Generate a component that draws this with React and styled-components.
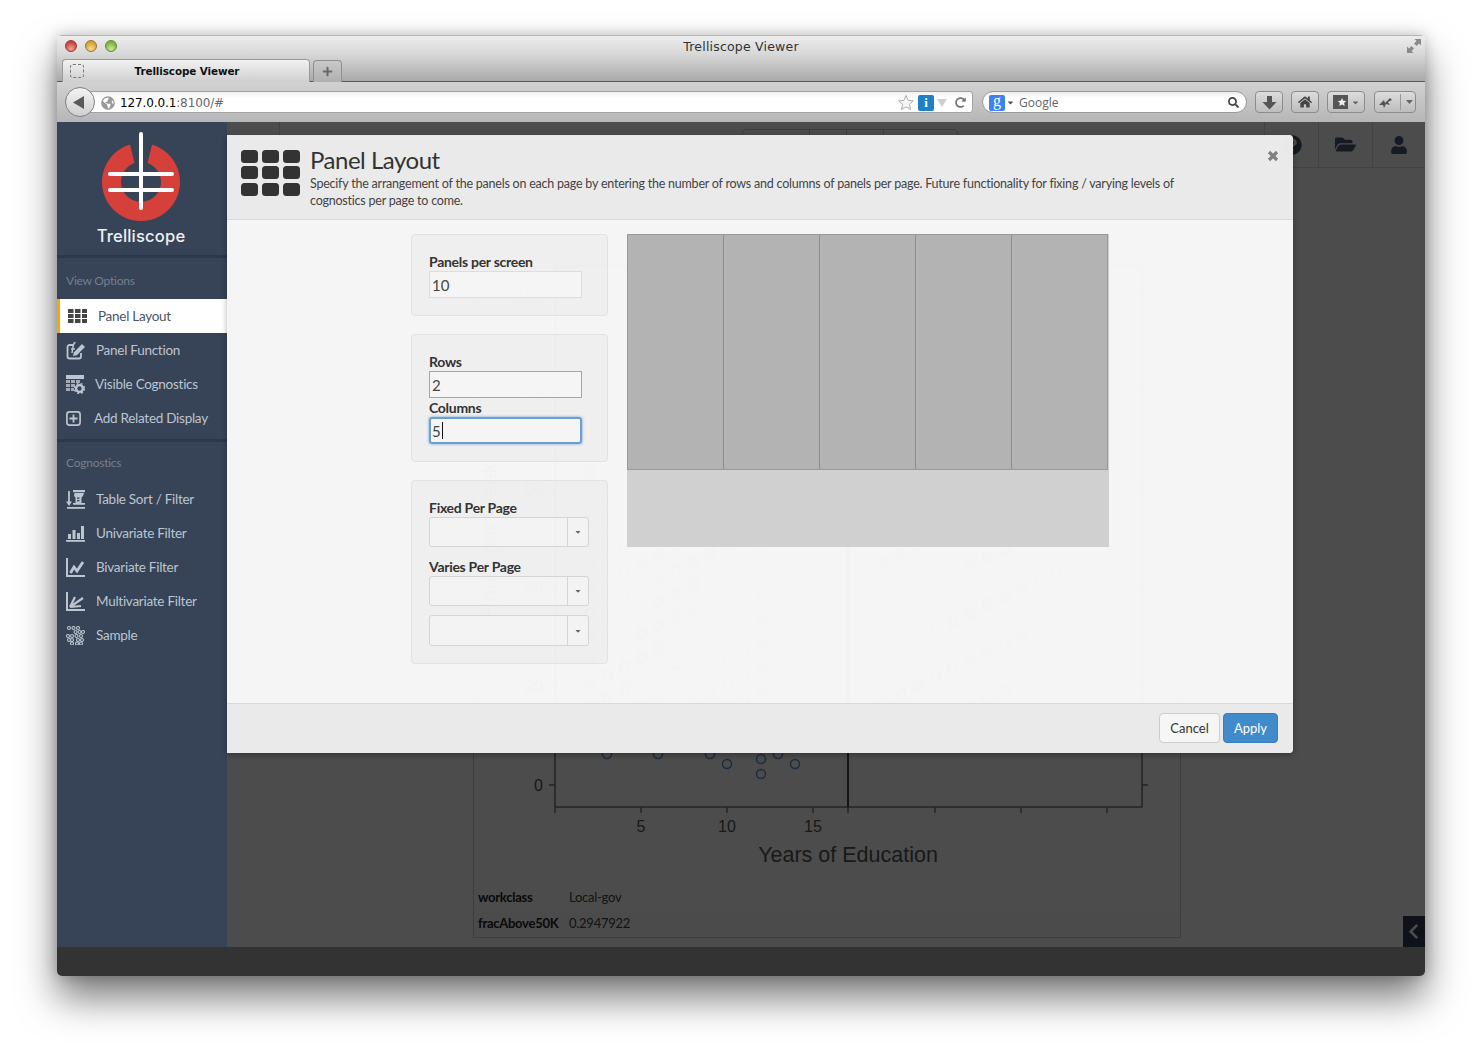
import React from "react";
import styled, { createGlobalStyle } from "styled-components";
import { FaFolderOpen, FaUser, FaChevronLeft, FaHome, FaSearch, FaPlus, FaCaretDown, FaRedoAlt, FaGlobeAmericas, FaQuestionCircle } from "react-icons/fa";

const Global = createGlobalStyle`
  html, body { margin: 0; padding: 0; background: #fff; }
  * { box-sizing: border-box; }
`;

const Page = styled.div`
  width: 1482px; height: 1055px; padding: 35px 57px 79px; overflow: hidden;
  background: #fff; font-family: Lato, "Open Sans", sans-serif;
`;
const Win = styled.div`
  height: 941px; display: flex; flex-direction: column; border-radius: 5px; overflow: hidden;
`;
const Shadow = styled.div`
  height: 941px; border-radius: 5px;
  box-shadow: 0 22px 38px rgba(0,0,0,.52), 0 0 14px rgba(0,0,0,.22);
`;
const TitleBar = styled.div`
  height: 47px; flex: none; position: relative; border-bottom: 1px solid #5a5a5a;
  border-top: 1px solid #b4b4b4;
  background: linear-gradient(#ececec, #d8d8d8 40%, #a9a9a9);
`;
const Lights = styled.div`
  position: absolute; left: 8px; top: 4px; display: flex; gap: 8px;
`;
const Light = styled.span`
  width: 12px; height: 12px; border-radius: 50%; border: 1px solid ${p => p.$edge};
  background: radial-gradient(circle at 50% 80%, ${p => p.$hi}, ${p => p.$c} 70%);
`;
const WinTitle = styled.div`
  position: absolute; left: 0; right: 0; top: 3px; text-align: center;
  font: 12.5px/16px "DejaVu Sans", sans-serif; letter-spacing: .2px; color: #333;
`;
const Expand = styled.svg`
  position: absolute; right: 4px; top: 3px; width: 14px; height: 14px;
`;
const TabRow = styled.div`
  position: absolute; left: 5px; top: 23px; display: flex; gap: 3px; align-items: flex-end;
`;
const Tab = styled.div`
  width: 248px; height: 23px; position: relative; display: flex; align-items: center; justify-content: center;
  border: 1px solid #9a9a9a; border-bottom: none; border-radius: 4px 4px 0 0;
  background: linear-gradient(#f2f2f2, #cfcfcf);
  font: bold 10.4px/14px "DejaVu Sans", sans-serif; letter-spacing: -.01em; color: #111; padding: 0 0 0 2px;
`;
const TabFav = styled.span`
  position: absolute; left: 7px; top: 4px; width: 14px; height: 14px;
  border: 1px dashed #777; border-radius: 3px;
`;
const NewTab = styled.div`
  width: 29px; height: 22px; display: flex; align-items: center; justify-content: center;
  border: 1px solid #8f8f8f; border-bottom: none; border-radius: 4px 4px 0 0;
  background: linear-gradient(#c9c9c9, #b0b0b0); color: #6a6a6a; font-size: 11px;
`;
const Toolbar = styled.div`
  height: 40px; flex: none; position: relative; display: flex; align-items: center; padding: 0 9px 0 8px;
  background: linear-gradient(#d2d2d2, #b6b6b6);
`;
const Back = styled.div`
  width: 30px; height: 30px; border-radius: 50%; flex: none; z-index: 1; display: flex; align-items: center; justify-content: center;
  border: 1px solid #808080; background: linear-gradient(#f4f4f4, #cfcfcf); padding-right: 3px;
`;
const Url = styled.div`
  width: 893px; height: 22px; margin-left: -15px; flex: none; display: flex; align-items: center; padding: 1px 5px 0 20px;
  border: 1px solid #a2a2a2; border-radius: 0 3px 3px 0; background: linear-gradient(#f0f0f0, #fff 30%);
  font: 12px/20px "DejaVu Sans", sans-serif; color: #000; letter-spacing: -.01em;
`;
const UrlMuted = styled.span` color: #666; `;
const UrlText = styled.span` margin-left: 5px; flex: 1; `;
const Info = styled.span`
  width: 16px; height: 16px; margin-left: 3px; display: flex; align-items: center; justify-content: center; border-radius: 2px;
  background: #1f80c8; color: #fff; font: bold 13px/16px "Liberation Serif", serif;
`;
const Search = styled.div`
  width: 265px; height: 22px; margin-left: 9px; flex: none; display: flex; align-items: center; padding: 1px 7px 0 6px;
  border: 1px solid #9a9a9a; border-radius: 11px; background: linear-gradient(#ececec, #fff 30%);
  font: 12px/20px "Open Sans", sans-serif; color: #666;
`;
const GBadge = styled.span`
  width: 16px; height: 16px; border-radius: 2px; background: #3d82f0; color: #fff; display: flex; align-items: center; justify-content: center;
  font: 16px/16px "Liberation Serif", serif; padding-bottom: 3px;
`;
const SearchText = styled.span` flex: 1; margin-left: 4px; `;
const ToolBtn = styled.div`
  width: ${p => p.$w}px; height: 22px; margin-left: ${p => p.$ml}px; flex: none; display: flex; align-items: center; justify-content: center; gap: 3px;
  border: 1px solid #8c8c8c; border-radius: 4px; background: linear-gradient(#dcdcdc, #bdbdbd); color: #444; font-size: 13px;
`;
const BtnSep = styled.span` width: 1px; height: 16px; background: #999; margin-left: 4px; `;
const Content = styled.div`
  flex: 1; position: relative; display: flex; flex-direction: column; min-height: 0;
`;
const Columns = styled.div` flex: 1; display: flex; min-height: 0; `;
const Side = styled.nav`
  width: 170px; flex: none; position: relative; z-index: 2; background: #374357;
`;
const Logo = styled.div`
  height: 136px; display: flex; flex-direction: column; align-items: center; padding: 10px 2px 0 0;
  border-bottom: 3px solid #2c3748;
`;
const LogoMark = styled.svg` width: 84px; height: 90px; flex: none; `;
const LogoText = styled.div`
  font: 500 16.6px/18px Inter, sans-serif; color: #eef0f2; margin-top: 5px; letter-spacing: .01em;
`;
const SideHead = styled.div`
  font-size: 12px; line-height: 16px; color: #74808f; padding: ${p => p.$pad}; letter-spacing: -.02em;
`;
const Item = styled.div`
  height: 34px; display: flex; align-items: center; gap: ${p => p.$gap}px;
  padding-left: ${p => p.$active ? 8 : 9}px;
  background: ${p => p.$active ? "#fff" : "transparent"};
  border-left: ${p => p.$active ? "3px solid #f5a800" : "none"};
  color: ${p => p.$active ? "#4a5568" : "#bcc5d0"};
  font-size: 13.5px; letter-spacing: -.02em;
`;
const SideRule = styled.div` height: 3px; margin-top: 4px; background: #2c3748; `;
const Main = styled.div`
  flex: 1; min-width: 0; display: flex; flex-direction: column; background: #fff;
`;
const TopBar = styled.div`
  height: 46px; flex: none; display: flex; align-items: stretch; justify-content: space-between; border-bottom: 1px solid #ddd;
`;
const Cell = styled.div`
  width: ${p => p.$w}px; display: flex; align-items: center; justify-content: center; color: #4a586e; font-size: 20px;
  border-${p => p.$side}: 1px solid #ddd;
`;
const Cells = styled.div` display: flex; `;
const Pager = styled.div`
  display: flex; align-items: center; height: 34px; margin: 7px 0 0 156px; border: 1px solid #ccc; border-radius: 4px; font-size: 13px; color: #888;
`;
const PagerCell = styled.span` width: ${p => p.$w}px; text-align: center; border-left: 1px solid #ccc; line-height: 32px; `;
const Stage = styled.div`
  flex: 1; min-height: 0; display: flex; justify-content: center; padding: 12px 0 9px 2px;
`;
const Card = styled.div`
  width: 708px; border: 1px solid #ccc; display: flex; flex-direction: column; background: #fff; padding-bottom: 1px;
`;
const Plot = styled.svg` flex: 1; min-height: 0; display: block; width: 706px; `;
const Meta = styled.div`
  height: 26px; flex: none; display: flex; align-items: center; padding-left: 4px; font-size: 13px; letter-spacing: -.02em;
  background: ${p => p.$alt ? "#fafafa" : "#fff"}; color: #444;
`;
const MetaKey = styled.b` width: 91px; flex: none; color: #222; `;
const Footer = styled.div` height: 29px; flex: none; background: #aaa; `;
const Chevron = styled.div`
  position: absolute; right: 0; bottom: 29px; width: 22px; height: 31px; padding-right: 2px; background: #323f50; color: #fff;
  display: flex; align-items: center; justify-content: center; font-size: 17px;
`;
const Dim = styled.div`
  position: absolute; inset: 0; background: rgba(0,0,0,.7); z-index: 1;
`;
const Modal = styled.div`
  position: absolute; left: 170px; top: 13px; width: 1066px; height: 618px; z-index: 3; display: flex; flex-direction: column;
  background: rgba(255,255,255,.945); border-radius: 0 4px 4px 0; box-shadow: 0 2px 6px rgba(0,0,0,.3);
`;
const ModalHead = styled.header`
  height: 85px; flex: none; position: relative; display: flex; gap: 10px; padding: 15px 0 0 14px;
  background: rgba(230,230,230,.7); border-bottom: 1px solid #d9d9d9; color: #333; border-radius: 0 4px 0 0;
`;
const HeadIcon = styled.svg` width: 59px; height: 46px; flex: none; `;
const HeadText = styled.div` width: 880px; margin-top: -3px; `;
const ModalTitle = styled.h3`
  margin: 0; font: 400 24px/26px Lato, sans-serif; color: #333; letter-spacing: -.02em;
`;
const ModalDesc = styled.p`
  margin: 2px 0 0; font: 12.5px/17px Lato, sans-serif; color: #444; letter-spacing: -.22px;
`;
const Close = styled.svg`
  position: absolute; right: 14px; top: 15px; width: 12px; height: 12px;
`;
const ModalBody = styled.div`
  flex: 1; display: flex; gap: 19px; padding: 14px 0 0 184px; align-items: flex-start;
`;
const FormCol = styled.div` width: 197px; display: flex; flex-direction: column; gap: 18px; `;
const Well = styled.section`
  border: 1px solid #e2e2e2; border-radius: 4px; background: rgba(225,225,225,.3); padding: 18px 17px 17px;
`;
const Label = styled.div`
  font: 700 14px/17px Lato, sans-serif; color: #333; letter-spacing: -.02em; margin: ${p => p.$mt || 0}px 0 1px;
`;
const Field = styled.div`
  width: 153px; height: 27px; padding-left: ${p => p.$focus ? 1 : 2}px; display: flex; align-items: center;
  font: 15px/20px Lato, sans-serif; color: #444;
  background: rgba(255,255,255,.4);
  border: ${p => p.$focus ? "2px solid #6a9fd4" : p.$dark ? "1px solid #a6a6a6" : "1px solid #ddd"};
  box-shadow: ${p => p.$focus ? "0 0 3px rgba(82,144,208,.8)" : "none"};
  border-radius: ${p => p.$focus ? "3px" : "0"};
`;
const Caret = styled.span` width: 1px; height: 17px; background: #111; margin-left: 1px; `;
const Select = styled.div`
  width: 160px; height: ${p => p.$h || 30}px; margin-top: ${p => p.$mt || 0}px; display: flex; justify-content: flex-end;
  border: 1px solid #d5d5d5; border-radius: 3px; background: rgba(255,255,255,.25);
`;
const SelectArrow = styled.span`
  width: 21px; border-left: 1px solid #d5d5d5; color: #666; font-size: 8px; display: flex; align-items: center; justify-content: center;
`;
const Preview = styled.div`
  width: 482px; height: 313px; flex: none; background: #d0d0d0;
`;
const PreviewRow = styled.div`
  width: 481px; height: 236px; display: flex; background: #b3b3b3; border: 1px solid #999;
`;
const PreviewCell = styled.div`
  flex: 1; border-left: ${p => p.$first ? "none" : "1px solid #8f8f8f"};
`;
const ModalFoot = styled.footer`
  height: 50px; flex: none; display: flex; justify-content: flex-end; align-items: center; gap: 3px; padding: 0 15px 1px 0;
  background: rgba(230,230,230,.7); border-top: 1px solid #d9d9d9; border-radius: 0 0 4px 0;
`;
const Btn = styled.button`
  height: 30px; width: ${p => p.$w}px; padding: 0; border-radius: 4px; font: 13px/18px Lato, sans-serif;
  border: 1px solid ${p => p.$primary ? "#3b7cbe" : "#ccc"};
  background: ${p => p.$primary ? "#428bca" : "#f6f6f6"};
  color: ${p => p.$primary ? "#fff" : "#333"};
`;

const s = { stroke: "currentColor", fill: "none" };
const IcoGrid = ({ c }) => (
  <svg width="19" height="15" viewBox="0 0 19 15" fill={c}>
    {[0, 7, 14].flatMap(x => [0, 5, 10].map(y => <rect key={x + "-" + y} x={x} y={y} width="5.5" height="4" />))}
  </svg>
);
const IcoFn = () => (
  <svg width="20" height="19" viewBox="0 0 20 19">
    <path d="M8 4H3.500A2 2 0 0 0 1.500 6v9.500a2 2 0 0 0 2 2H13a2 2 0 0 0 2-2V12" {...s} strokeWidth="1.800" />
    <path d="M7 15l.8-3.600L16 3l3 3-8.200 8.300z" fill="currentColor" />
    <path d="M5 8h4M9.500 1.500C7.500 1.500 7.500 3 7 6L6 12" {...s} strokeWidth="1.500" />
  </svg>
);
const IcoVis = () => (
  <svg width="19" height="19" viewBox="0 0 19 19" fill="currentColor">
    <rect x="0" y="0" width="18" height="4" />
    {[5, 9, 13].flatMap(y => [0, 5, 10].map(x => <rect key={x + "-" + y} x={x} y={y} width="4" height="3" opacity=".8" />))}
    <circle cx="13.500" cy="13.500" r="5.500" fill="#374357" />
    <circle cx="13.500" cy="13.500" r="3.400" fill="none" stroke="currentColor" strokeWidth="2.400" />
    <circle cx="13.500" cy="13.500" r="5" fill="none" stroke="currentColor" strokeWidth="1.400" strokeDasharray="2 2" />
  </svg>
);
const IcoAdd = () => (
  <svg width="15" height="15" viewBox="0 0 15 15">
    <rect x=".9" y=".9" width="13.200" height="13.200" rx="2.500" {...s} strokeWidth="1.700" />
    <path d="M7.500 3.500v8M3.500 7.500h8" {...s} strokeWidth="1.800" />
  </svg>
);
const IcoTable = () => (
  <svg width="19" height="20" viewBox="0 0 19 20" fill="currentColor">
    <path d="M3 2v12" {...s} strokeWidth="1.800" />
    <path d="M0 12.500h6L3 17z" />
    <rect x="7" y="1" width="12" height="2.200" />
    <path d="M8.500 4H18l-1 3-1.500 1.500V14H19v1.800H7V14h2.500V8.500L8 7z" />
    <rect x="1" y="18" width="18" height="1.800" />
    <rect x="11" y="8.500" width="2.500" height="1.300" fill="#374357" />
    <rect x="11" y="11" width="2.500" height="1.300" fill="#374357" />
  </svg>
);
const IcoUni = () => (
  <svg width="19" height="18" viewBox="0 0 19 18" fill="currentColor">
    <rect x="2" y="10" width="3" height="5" /><rect x="6.500" y="6" width="3" height="9" /><rect x="11" y="9" width="3" height="6" /><rect x="15" y="2" width="3" height="13" />
    <rect x="0" y="16" width="19" height="1.800" />
  </svg>
);
const IcoBi = () => (
  <svg width="19" height="19" viewBox="0 0 19 19">
    <path d="M1 0v18h18" {...s} strokeWidth="2" />
    <path d="M4.500 15l3.500-6 3 4 6-9" {...s} strokeWidth="2.800" />
  </svg>
);
const IcoMulti = () => (
  <svg width="19" height="19" viewBox="0 0 19 19">
    <path d="M1 0v18h18" {...s} strokeWidth="2" />
    <path d="M4 15L9 5 M4 15L17 6 M4 15l11-1" {...s} strokeWidth="2.200" />
  </svg>
);
const IcoSample = () => (
  <svg width="19" height="19" viewBox="0 0 19 19">
    {[[3,2],[7.500,2],[12,2],[9.500,6],[13.500,6],[17,6],[2,10],[6,10],[10.500,10],[15,10],[6,14],[3,14],[12,14],[16,14],[6,17.500],[11,17.500],[15,17.500]].map(([x, y]) => (
      <circle key={x + "-" + y} cx={x} cy={y} r="1.500" {...s} strokeWidth="1.100" />
    ))}
  </svg>
);

const ticksY = [[0, 785], [20, 686], [40, 587], [60, 488], [80, 389], [100, 291]];
const pts = [[607,754],[658,754],[710,754],[727,764],[761,759],[761,774],[778,754],[795,764]];
for (let i = 0; i < 160; i++) {
  const x = 590 + ((i * 37) % 11) * 17.2;
  const y = 470 + ((i * 61) % 97) * 2.9;
  if (y < 745) pts.push([x, y]);
  if (i % 2 && y < 720) pts.push([x + 294, y + 20]);
}

const views = [
  { label: "Panel Layout", active: true, gap: 11, icon: <IcoGrid c="#444" /> },
  { label: "Panel Function", gap: 10, icon: <IcoFn /> },
  { label: "Visible Cognostics", gap: 10, icon: <IcoVis /> },
  { label: "Add Related Display", gap: 13, icon: <IcoAdd /> },
];
const cogs = [
  { label: "Table Sort / Filter", gap: 11, icon: <IcoTable /> },
  { label: "Univariate Filter", gap: 11, icon: <IcoUni /> },
  { label: "Bivariate Filter", gap: 11, icon: <IcoBi /> },
  { label: "Multivariate Filter", gap: 11, icon: <IcoMulti /> },
  { label: "Sample", gap: 11, icon: <IcoSample /> },
];

export default function App() {
  return (
    <Page>
      <Global />
      <Shadow>
        <Win>
          <TitleBar>
            <Lights>
              <Light $c="#c9453c" $hi="#f4a09a" $edge="#8e3a34" />
              <Light $c="#d6a035" $hi="#f8dc8c" $edge="#94752e" />
              <Light $c="#7fb13f" $hi="#cbe896" $edge="#5f8a33" />
            </Lights>
            <WinTitle>Trelliscope Viewer</WinTitle>
            <Expand viewBox="0 0 14 14">
              <path d="M7.500 0H14v6.500l-2-2-2.500 2.500L7 4.500 9.500 2zM6.500 14H0V7.500l2 2L4.500 7 7 9.500 4.500 12z" fill="#8a8a8a" />
            </Expand>
            <TabRow>
              <Tab><TabFav />Trelliscope Viewer</Tab>
              <NewTab><FaPlus /></NewTab>
            </TabRow>
          </TitleBar>
          <Toolbar>
            <Back>
              <svg width="13" height="15" viewBox="0 0 13 15"><path d="M12 1v13L1 7.500z" fill="#5a5a5a" /></svg>
            </Back>
            <Url>
              <FaGlobeAmericas color="#9a9a9a" size={14} />
              <UrlText>127.0.0.1<UrlMuted>:8100/#</UrlMuted></UrlText>
              <svg width="18" height="17" viewBox="0 0 24 24"><path d="M12 2l3 7 7.500.7-5.700 5 1.700 7.300L12 18.200 5.500 22l1.700-7.300-5.700-5L9 9z" fill="#f4f4f4" stroke="#aaa" strokeWidth="1.400" /></svg>
              <Info>i</Info>
              <svg width="10" height="8" viewBox="0 0 10 8" style={{ marginLeft: 3 }}><path d="M0 0h10L5 8z" fill="#cfcfcf" /></svg>
              <FaRedoAlt color="#777" size={11} style={{ marginLeft: 8, marginRight: 1 }} />
            </Url>
            <Search>
              <GBadge>g</GBadge>
              <FaCaretDown size={9} color="#555" style={{ marginLeft: 1 }} />
              <SearchText>Google</SearchText>
              <FaSearch size={11} color="#444" />
            </Search>
            <ToolBtn $w={28} $ml={8}>
              <svg width="15" height="15" viewBox="0 0 15 15"><path d="M5 1h5v6h4.500L7.500 14.500.5 7H5z" fill="#555" /></svg>
            </ToolBtn>
            <ToolBtn $w={28} $ml={8}><FaHome size={14} /></ToolBtn>
            <ToolBtn $w={38} $ml={8}>
              <svg width="15" height="14" viewBox="0 0 15 14"><rect width="15" height="14" fill="#555" /><path d="M9 3l1.300 2.700 3 .3-2.200 2 .6 3L9 9.500 6.300 11l.6-3-2.200-2 3-.3z" fill="#eee" /></svg>
              <FaCaretDown size={9} color="#666" />
            </ToolBtn>
            <ToolBtn $w={42} $ml={9}>
              <svg width="15" height="12" viewBox="0 0 15 12"><path d="M1 9l5-5 1 3 5-5 2 2-4 2 2 3-4-1-2 4-1-3z" fill="#555" /></svg>
              <BtnSep />
              <svg width="7" height="4" viewBox="0 0 7 4" style={{ marginLeft: 2 }}><path d="M0 0h7L3.500 4z" fill="#666" /></svg>
            </ToolBtn>
          </Toolbar>
          <Content>
            <Columns>
              <Side>
                <Logo>
                  <LogoMark viewBox="0 0 84 90">
                    <path d="M31 12.600A39 39 0 1 0 53 12.600L48.500 31.100A20 20 0 1 1 35.500 31.100z" fill="#d5403a" />
                    <path d="M42 2v74M11 42h62M11 58h62" stroke="#fff" strokeWidth="4" strokeLinecap="round" fill="none" />
                  </LogoMark>
                  <LogoText>Trelliscope</LogoText>
                </Logo>
                <SideHead $pad="15px 9px 10px">View Options</SideHead>
                {views.map(v => (
                  <Item key={v.label} $active={v.active} $gap={v.gap}>{v.icon}<span>{v.label}</span></Item>
                ))}
                <SideRule />
                <SideHead $pad="13px 9px 11px">Cognostics</SideHead>
                {cogs.map(v => (
                  <Item key={v.label} $gap={v.gap}>{v.icon}<span>{v.label}</span></Item>
                ))}
              </Side>
              <Main>
                <TopBar>
                  <Cell $w={53} $side="right" />
                  <Pager>
                    <PagerCell $w={66} />
                    <PagerCell $w={37}>◀</PagerCell>
                    <PagerCell $w={37}>▶</PagerCell>
                    <PagerCell $w={74}>1x</PagerCell>
                  </Pager>
                  <Cells>
                    <Cell $w={54} $side="left"><FaQuestionCircle size={20} /></Cell>
                    <Cell $w={54} $side="left"><FaFolderOpen size={21} /></Cell>
                    <Cell $w={53} $side="left"><FaUser size={18} /></Cell>
                  </Cells>
                </TopBar>
                <Stage>
                  <Card>
                    <Plot viewBox="474 181 706 702" preserveAspectRatio="xMinYMin meet">
                      <g fill="none" stroke="#777" strokeWidth="1.500">
                        <rect x="555" y="266" width="293" height="541" />
                        <rect x="848" y="266" width="294" height="541" />
                        {[555, 641, 727, 813, 848, 935, 1021, 1107].map(x => <path key={x} d={`M${x} 807v6`} />)}
                        {ticksY.map(([, y]) => <path key={y} d={`M549 ${y}h6M1142 ${y}h6`} />)}
                        <path d="M848 266v541" stroke="#333" />
                      </g>
                      <g fill="#555" fontFamily="Liberation Sans, sans-serif" fontSize="16">
                        {ticksY.map(([t, y]) => <text key={t} x="543" y={y + 6} textAnchor="end">{t}</text>)}
                        <text x="641" y="832" textAnchor="middle">5</text>
                        <text x="727" y="832" textAnchor="middle">10</text>
                        <text x="813" y="832" textAnchor="middle">15</text>
                        <text x="848" y="862" textAnchor="middle" fontSize="21.500">Years of Education</text>
                        <text x="700" y="256" textAnchor="middle" fontSize="16">&lt;=Fri</text>
                        <text x="995" y="256" textAnchor="middle" fontSize="16">&gt;=Fri</text>
                        <text transform="translate(497 540) rotate(-90)" textAnchor="middle" fontSize="21.500">Hours per Week</text>
                      </g>
                      <g fill="none" stroke="#5b93d8" strokeWidth="1.500">
                        {pts.map(([x, y], i) => <circle key={i} cx={x} cy={y} r="4.500" />)}
                      </g>
                    </Plot>
                    <Meta><MetaKey>workclass</MetaKey>Local-gov</Meta>
                    <Meta $alt><MetaKey>fracAbove50K</MetaKey>0.2947922</Meta>
                  </Card>
                </Stage>
              </Main>
            </Columns>
            <Footer />
            <Chevron><FaChevronLeft /></Chevron>
            <Dim />
            <Modal>
              <ModalHead>
                <HeadIcon viewBox="0 0 59 46" fill="#333">
                  {[0, 21, 42].flatMap(x => [0, 16, 33].map(y => <rect key={x + "-" + y} x={x} y={y} width="17" height="13" rx="3.500" />))}
                </HeadIcon>
                <HeadText>
                  <ModalTitle>Panel Layout</ModalTitle>
                  <ModalDesc>Specify the arrangement of the panels on each page by entering the number of rows and columns of panels per page. Future functionality for fixing / varying levels of cognostics per page to come.</ModalDesc>
                </HeadText>
                <Close viewBox="0 0 12 12"><path d="M2 2l8 8M10 2l-8 8" stroke="#808080" strokeWidth="3.200" /></Close>
              </ModalHead>
              <ModalBody>
                <FormCol>
                  <Well>
                    <Label>Panels per screen</Label>
                    <Field>10</Field>
                  </Well>
                  <Well>
                    <Label>Rows</Label>
                    <Field $dark>2</Field>
                    <Label $mt={1}>Columns</Label>
                    <Field $focus>5<Caret /></Field>
                  </Well>
                  <Well>
                    <Label>Fixed Per Page</Label>
                    <Select><SelectArrow><FaCaretDown /></SelectArrow></Select>
                    <Label $mt={11}>Varies Per Page</Label>
                    <Select><SelectArrow><FaCaretDown /></SelectArrow></Select>
                    <Select $mt={9} $h={31}><SelectArrow><FaCaretDown /></SelectArrow></Select>
                  </Well>
                </FormCol>
                <Preview>
                  <PreviewRow>
                    {[0, 1, 2, 3, 4].map(i => <PreviewCell key={i} $first={i === 0} />)}
                  </PreviewRow>
                </Preview>
              </ModalBody>
              <ModalFoot>
                <Btn $w={61}>Cancel</Btn>
                <Btn $w={55} $primary>Apply</Btn>
              </ModalFoot>
            </Modal>
          </Content>
        </Win>
      </Shadow>
    </Page>
  );
}
